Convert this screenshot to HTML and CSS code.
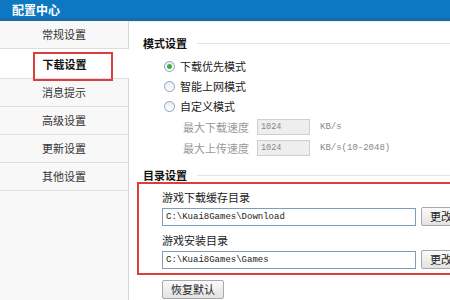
FILE: index.html
```html
<!DOCTYPE html>
<html lang="zh-CN">
<head>
<meta charset="UTF-8" />
<title>配置中心</title>
<link rel="stylesheet" href="styles.css">
</head>
<body>
  <div class="titlebar">配置中心</div>
  <div class="wrap">
    <ul class="menu">
      <li>常规设置</li>
      <li class="active"><span class="mark"></span>下载设置</li>
      <li>消息提示</li>
      <li>高级设置</li>
      <li>更新设置</li>
      <li>其他设置</li>
    </ul>
    <div class="panel">
      <div class="legend">模式设置</div>
      <div class="radios">
        <div class="radio"><span class="dot on"></span>下载优先模式</div>
        <div class="radio"><span class="dot"></span>智能上网模式</div>
        <div class="radio"><span class="dot"></span>自定义模式</div>
      </div>
      <div class="speed">
        <span class="speed-label">最大下载速度</span>
        <span class="num">1024</span>
        <span class="unit">KB/s</span>
      </div>
      <div class="speed">
        <span class="speed-label">最大上传速度</span>
        <span class="num">1024</span>
        <span class="unit">KB/s(10-2048)</span>
      </div>
      <div class="legend legend2">目录设置</div>
      <div class="dirs">
        <div class="dir-label">游戏下载缓存目录</div>
        <div class="dir-row">
          <span class="path">C:\Kuai8Games\Download</span>
          <button class="btn">更改</button>
        </div>
        <div class="dir-label second">游戏安装目录</div>
        <div class="dir-row">
          <span class="path">C:\Kuai8Games\Games</span>
          <button class="btn">更改</button>
        </div>
      </div>
      <button class="btn reset">恢复默认</button>
    </div>
  </div>
</body>
</html>
```

FILE: styles.css
```css
body {
  margin: 0;
  width: 450px;
  height: 300px;
  overflow: hidden;
  background: #fff;
  font-family: "Noto Sans CJK SC", "Liberation Sans", sans-serif;
  font-size: 11px;
  color: #222;
}
.titlebar {
  height: 18px;
  line-height: 19px;
  padding-left: 12px;
  background: #0b78c1;
  border-bottom: 3px solid #1c6aa6;
  box-shadow: 0 1px 0 #dff4f8;
  color: #fff;
  font-weight: bold;
  font-size: 12px;
}
.wrap {
  display: flex;
  height: 279px;
}
.menu {
  list-style: none;
  margin: 0;
  padding: 0;
  width: 128px;
  background: #f8f8f8;
  border-right: 1px solid #d6d6d6;
  flex-shrink: 0;
}
.menu li {
  height: 27px;
  line-height: 27px;
  text-align: center;
  color: #333;
  border-bottom: 1px solid #dedede;
  position: relative;
}
.menu li.active {
  height: 29px;
  line-height: 31px;
  background: #fff;
  font-weight: bold;
  color: #111;
  margin-right: -1px;
}
.mark {
  position: absolute;
  left: 33px;
  top: 3px;
  width: 76px;
  height: 25px;
  border: 2px solid #e03c3c;
}
.panel {
  flex: 1;
  padding-left: 14px;
}
.legend {
  display: flex;
  align-items: center;
  margin-top: 14px;
  height: 16px;
  font-weight: bold;
  color: #111;
}
.legend::after {
  content: "";
  flex: 1;
  height: 1px;
  margin-left: 10px;
  background: #e4e4e4;
}
.radios {
  margin-top: 5px;
  padding-left: 21px;
}
.radio {
  display: flex;
  align-items: center;
  height: 20px;
  color: #222;
}
.dot {
  width: 9px;
  height: 9px;
  border: 1px solid #8aa3bb;
  border-radius: 50%;
  background: linear-gradient(#e6eef5, #fff);
  margin-right: 5px;
  display: flex;
  align-items: center;
  justify-content: center;
}
.dot.on::after {
  content: "";
  width: 5px;
  height: 5px;
  border-radius: 50%;
  background: #3fae3f;
}
.speed {
  display: flex;
  align-items: center;
  height: 21px;
  padding-left: 40px;
  color: #999;
}
.speed-label {
  width: 74px;
}
.num {
  width: 48px;
  height: 14px;
  line-height: 14px;
  padding-left: 3px;
  background: #eee;
  border: 1px solid #cfcfcf;
  font-family: "Liberation Mono", monospace;
  font-size: 8.5px;
  color: #888;
}
.unit {
  margin-left: 10px;
  font-family: "Liberation Mono", monospace;
  font-size: 9px;
  color: #888;
}
.legend2 {
  margin-top: 10px;
  height: 14px;
}
.dirs {
  margin-left: -6px;
  width: 330px;
  padding: 6px 0 4px 23px;
  border: 2px solid #e03c3c;
}
.dir-label {
  line-height: 14px;
  color: #222;
}
.dir-label.second {
  margin-top: 7px;
}
.dir-row {
  display: flex;
  margin-top: 4px;
  gap: 5px;
}
.path {
  width: 249px;
  height: 16px;
  line-height: 16px;
  padding-left: 3px;
  border: 1px solid #7f9db9;
  font-family: "Liberation Mono", monospace;
  font-size: 9px;
  color: #222;
}
.btn {
  height: 19px;
  padding: 0;
  white-space: nowrap;
  font-family: "Noto Sans CJK SC", sans-serif;
  font-size: 11px;
  line-height: 15px;
  color: #222;
  background: linear-gradient(#fafafa, #e2e2e2);
  border: 1px solid #a9a9a9;
  border-radius: 2px;
}
.dir-row .btn {
  margin-top: -1px;
  width: 40px;
  flex-shrink: 0;
}
.reset {
  display: block;
  margin: 5px 0 0 19px;
  width: 62px;
}
```
